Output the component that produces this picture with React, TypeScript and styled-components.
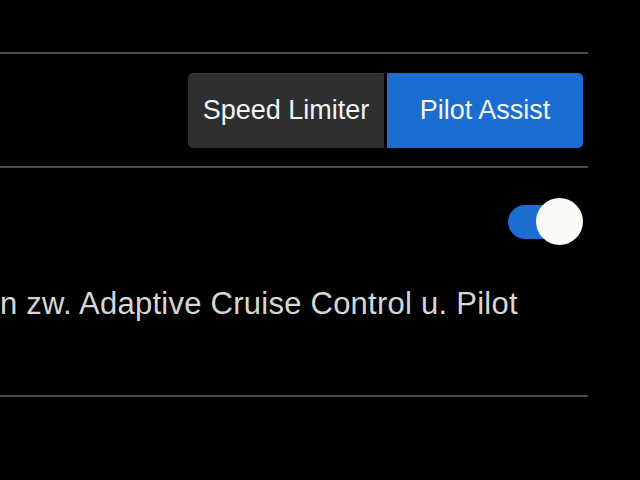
import React from "react";
import styled, {createGlobalStyle} from "styled-components";

const GlobalStyle = createGlobalStyle`
  html, body {
    margin: 0;
    background: #000;
    font-family: "Liberation Sans", Arial, sans-serif;
  }
`

const Screen = styled.div`
  width: 640px;
  height: 480px;
  overflow: hidden;
  background: #000;
`

const List = styled.div`
  width: 588px;
  display: flex;
  flex-direction: column;
`

const Row = styled.div<{ $height: number }>`
  height: ${props => props.$height}px;
  box-sizing: border-box;
  border-bottom: 2px solid #4b4b4d;
  padding-right: 5px;
  display: flex;
  flex-direction: column;
`

const CenterRight = styled.div`
  flex: 1;
  display: flex;
  align-items: center;
  justify-content: flex-end;
`

const Segmented = styled.div`
  display: flex;
  gap: 3px;
  border-radius: 5px;
  overflow: hidden;
`

const Segment = styled.div<{ $active?: boolean }>`
  width: 196px;
  height: 75px;
  display: flex;
  align-items: center;
  justify-content: center;
  font-size: 27px;
  color: #f4f4f4;
  background: ${props => props.$active ? '#1b6dcf' : '#2e2f30'};
`

const ToggleLine = styled.div`
  display: flex;
  justify-content: flex-end;
  padding-top: 30px;
`

const Toggle = styled.div`
  position: relative;
  width: 75px;
  height: 47px;
`

const Track = styled.div`
  position: absolute;
  left: 0;
  top: 7px;
  width: 54px;
  height: 34px;
  border-radius: 17px;
  background: #1b6dcf;
`

const Knob = styled.div`
  position: absolute;
  right: 0;
  top: 0;
  width: 47px;
  height: 47px;
  border-radius: 50%;
  background: #fbfbf6;
`

const Description = styled.div`
  margin-top: 41px;
  font-size: 31px;
  letter-spacing: 0.25px;
  color: #d6d6d6;
  white-space: nowrap;
  line-height: 36px;
`

export default function App() {
  return <Screen>
    <GlobalStyle/>
    <List>
      <Row $height={54}/>
      <Row $height={114}>
        <CenterRight>
          <Segmented>
            <Segment>Speed Limiter</Segment>
            <Segment $active>Pilot Assist</Segment>
          </Segmented>
        </CenterRight>
      </Row>
      <Row $height={229}>
        <ToggleLine>
          <Toggle>
            <Track/>
            <Knob/>
          </Toggle>
        </ToggleLine>
        <Description>n zw. Adaptive Cruise Control u. Pilot</Description>
      </Row>
    </List>
  </Screen>
}
